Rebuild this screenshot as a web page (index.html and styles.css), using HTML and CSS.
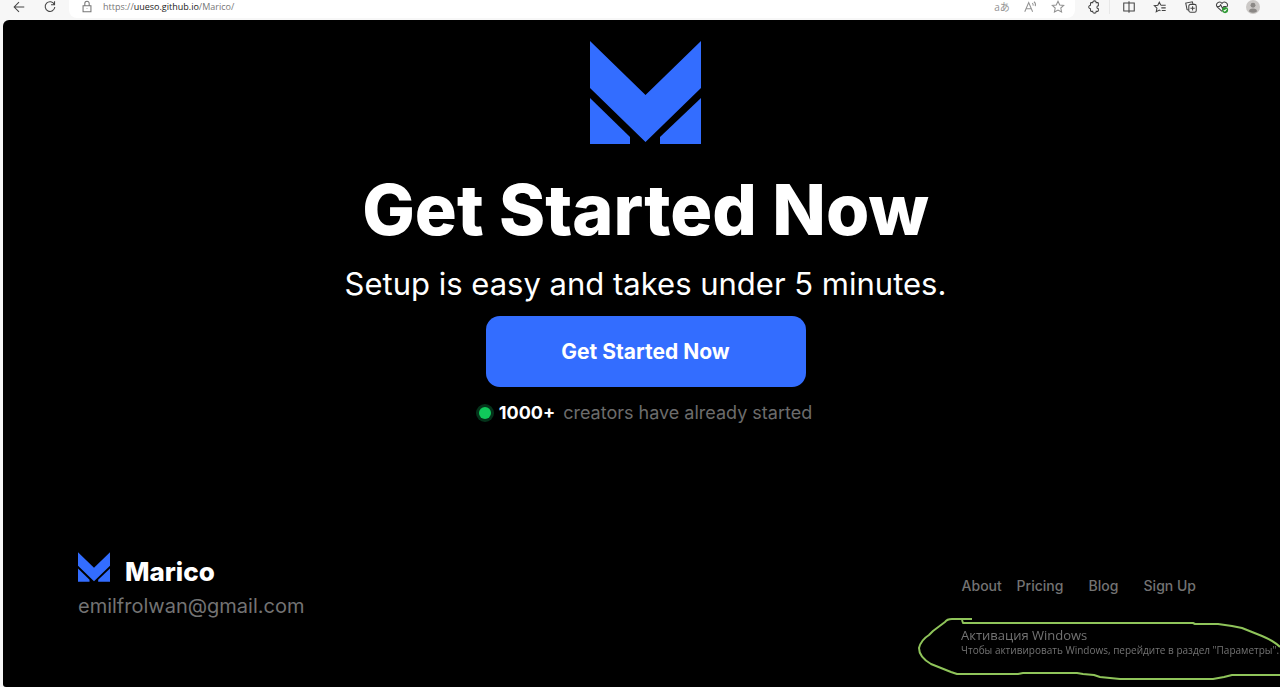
FILE: index.html
```html
<!DOCTYPE html>
<html lang="en">
<head>
<meta charset="utf-8">
<title>Marico</title>
<link rel="stylesheet" href="styles.css">
</head>
<body>
<svg class="defs" aria-hidden="true">
  <symbol id="logo" viewBox="0 0 111 103">
    <path d="M0 0 55.500 54 111 0V47L55.500 101 0 47Z"/>
    <path d="M0 57 40 96V103H0Z"/>
    <path d="M111 57 70 96V103H111Z"/>
  </symbol>
</svg>
<header class="toolbar">
  <button class="tool" aria-label="Back"><svg viewBox="0 0 16 16"><path d="M14 8H2.500M8 2.500 2.500 8 8 13.500"/></svg></button>
  <button class="tool" aria-label="Refresh"><svg viewBox="0 0 16 16"><path d="M13 5.200A5.500 5.500 0 1 0 13.500 8M13.200 1.500V5.500H9.200"/></svg></button>
  <div class="address">
    <svg class="lock" viewBox="0 0 16 16"><path d="M3.500 6.500h9v7h-9zM5.500 6.500V4a2.500 2.500 0 0 1 5 0v2.500M8 9.800v.6"/></svg>
    <span class="url">https://<b>uueso.github.io</b>/Marico/</span>
    <button class="tool pale letters" aria-label="Translate">aあ</button>
    <button class="tool pale" aria-label="Read aloud"><svg viewBox="0 0 16 16"><path d="M2 13.500 6.500 3 11 13.500M3.600 10h5.800M10.500 3.500q1.500 1 1 3M12.500 2q2.500 1.800 1.500 5"/></svg></button>
    <button class="tool pale" aria-label="Add to favorites"><svg viewBox="0 0 16 16"><path d="m8 1.500 2 4.200 4.500.5-3.300 3 .9 4.600L8 11.600l-4.100 2.200.9-4.600-3.300-3 4.500-.5z"/></svg></button>
  </div>
  <div class="tools">
    <button class="tool extensions" aria-label="Extensions"><svg viewBox="0 0 16 16"><path d="M5 3h1.500a2 2 0 0 1 4 0H12a1 1 0 0 1 1 1v2.500a1.700 1.700 0 0 0 0 3.400V12a1 1 0 0 1-1 1h-1.500a2 2 0 0 1-4 0H5a1 1 0 0 1-1-1v-2a2 2 0 0 1 0-4V4a1 1 0 0 1 1-1z"/></svg></button>
    <button class="tool" aria-label="Split screen"><svg viewBox="0 0 16 16"><path d="M8 3.500H2v9h6M8 3.500h6v9H8M8 1.500v13"/></svg></button>
    <button class="tool" aria-label="Favorites"><svg viewBox="0 0 16 16"><path d="M9 6 7.200 2.500 5.500 6l-4 .5 3 2.800-.8 4.200 3.500-2 1.300.8M9 6h5.500M9.500 9h5M10 12h4.500"/></svg></button>
    <button class="tool" aria-label="Collections"><svg viewBox="0 0 16 16"><path d="M5 11.500 3.500 11 2 3.500 9.500 2l.7 2.500M7.500 5H12a2 2 0 0 1 2 2v5a2 2 0 0 1-2 2H7.500a2 2 0 0 1-2-2V7a2 2 0 0 1 2-2zM9.800 7v5M7.300 9.500h5"/></svg></button>
    <button class="tool" aria-label="Browser essentials"><svg viewBox="0 0 16 16"><path d="M8 13 2.500 7.800a3.300 3.300 0 0 1 5.500-4 3.300 3.300 0 0 1 5.500 4M2 7.500h3l1.500-2 2 4 1.500-2h3"/><circle class="badge" cx="11.500" cy="11.500" r="3.500"/><path class="tick" d="m10 11.500 1.200 1.200 2-2.200"/></svg></button>
    <button class="tool" aria-label="Profile"><svg class="avatar" viewBox="0 0 16 16"><circle class="disc" cx="8" cy="8" r="8"/><circle class="person" cx="8" cy="6" r="2.800"/><path class="person" d="M3.500 13a4.500 3.200 0 0 1 9 0q-4.500 3-9 0z"/></svg></button>
  </div>
</header>
<div class="page">
  <main class="hero">
    <svg class="hero-logo" role="img" aria-label="Marico logo"><use href="#logo"/></svg>
    <h1 class="title">Get Started Now</h1>
    <p class="subtitle">Setup is easy and takes under 5 minutes.</p>
    <button class="cta">Get Started Now</button>
    <p class="proof"><span class="dot"></span><strong>1000+</strong><span>creators have already started</span></p>
  </main>
  <footer class="footer">
    <div>
      <div class="brand"><svg class="brand-logo" aria-hidden="true"><use href="#logo"/></svg><span>Marico</span></div>
      <a class="email" href="mailto:emilfrolwan@gmail.com">emilfrolwan@gmail.com</a>
    </div>
    <nav class="links"><a href="#">About</a><a href="#">Pricing</a><a href="#">Blog</a><a href="#">Sign Up</a></nav>
  </footer>
</div>
<aside class="activation" lang="ru">
  <svg class="scribble" viewBox="0 0 364 72" aria-hidden="true"><path d="M56 4H36Q31 4 29 7L17 16 13 20Q5 25 3 33 3 42 15 49L35 57 41 59H102L107 58H161L167 59 178 60 184 62 204 64H297L308 62 316 60H364M46 5 47 8H277L279 9H302L316 11 326 13 346 21Q358 26 364 32"/></svg>
  <p class="activation-title">Активация Windows</p>
  <p class="activation-text">Чтобы активировать Windows, перейдите в раздел "Параметры".</p>
</aside>
</body>
</html>
```

FILE: styles.css
```css
* { box-sizing: border-box; }

body {
  display: flex;
  flex-direction: column;
  min-height: 100vh;
  margin: 0;
  background: #f7f7f7;
  font-family: Inter, "Open Sans", sans-serif;
}

h1, p { margin: 0; }
a { color: inherit; text-decoration: none; }
button { border: 0; font-family: inherit; cursor: pointer; }

.defs { position: absolute; width: 0; height: 0; }

/* Browser toolbar */
.toolbar {
  display: flex;
  align-items: flex-start;
  gap: 7px;
  height: 20px;
  padding: 0 15px 0 7px;
}

.tool {
  display: grid;
  place-items: center;
  width: 24px;
  height: 14px;
  padding: 0;
  background: none;
  color: #444;
}

.tool svg, .lock {
  width: 14px;
  height: 14px;
  fill: none;
  stroke: currentColor;
  stroke-width: 1.2;
}

.pale { color: #929292; }
.letters { font: 10px "Open Sans", "Noto Sans CJK JP", sans-serif; line-height: 14px; }

.address {
  display: flex;
  flex: 1;
  gap: 4px;
  height: 18px;
  padding: 0 5px 0 11px;
  border-radius: 0 0 8px 8px;
  background: #fff;
}

.lock { color: #777; }

.url {
  flex: 1;
  padding-left: 5px;
  color: #777;
  font: 9px/14px "Open Sans", sans-serif;
}

.url b { color: #222; font-weight: 400; }

.tools { display: flex; gap: 7px; }

.extensions {
  width: 28px;
  padding-right: 3px;
  border-right: 1px solid #e8e8e8;
}

.tool .badge { fill: #2f9a35; stroke: none; }
.tool .tick { stroke: #fff; }
.tool .disc { fill: #cbc8c6; stroke: none; }
.tool .person { fill: #8b8886; stroke: none; }

/* Page */
.page {
  display: flex;
  flex: 1;
  flex-direction: column;
  justify-content: space-between;
  margin-left: 3px;
  border-radius: 6px 0 0 3px;
  background: #000;
}

.hero {
  display: flex;
  flex-direction: column;
  align-items: center;
  padding: 21px 0 0 8px;
  color: #fff;
  text-align: center;
}

.hero-logo { width: 111px; height: 103px; fill: #336dff; }
.title { margin-top: 24px; font-size: 70px; font-weight: 800; line-height: 84px; }
.subtitle { margin-top: 8px; font-size: 31px; line-height: 48px; }

.cta {
  width: 320px;
  margin-top: 8px;
  padding: 20px;
  border-radius: 14px;
  background: #336dff;
  color: #fff;
  font-size: 21px;
  font-weight: 700;
  line-height: 31px;
}

.proof {
  display: flex;
  align-items: center;
  gap: 8px;
  margin-top: 12px;
  color: #6c6c6c;
  font-size: 18px;
  line-height: 28px;
}

.proof strong { color: #fff; }

.dot {
  width: 12px;
  height: 12px;
  border-radius: 50%;
  background: #10c95b;
  box-shadow: 0 0 0 3px #04331a;
}

.footer {
  display: flex;
  align-items: center;
  justify-content: space-between;
  padding: 0 84px 67px 75px;
  color: #737373;
}

.brand {
  display: flex;
  gap: 15px;
  color: #fff;
  font-size: 26px;
  font-weight: 800;
  line-height: 40px;
}

.brand-logo { width: 32px; height: 30px; fill: #336dff; }
.email { display: block; font-size: 20px; line-height: 28px; }

.links {
  display: grid;
  grid-template-columns: 55px 72px 55px auto;
  font-size: 14px;
  font-weight: 500;
  line-height: 20px;
}

/* Windows activation notice */
.activation {
  position: fixed;
  right: 0;
  bottom: 0;
  width: 364px;
  height: 72px;
  padding: 11px 0 0 45px;
  color: #737373;
  font-family: "Open Sans", sans-serif;
  white-space: nowrap;
  pointer-events: none;
}

.scribble {
  position: absolute;
  inset: 0;
  fill: none;
  stroke: #8fc45a;
  stroke-width: 2;
  stroke-linejoin: round;
}

.activation-title { font-size: 13px; line-height: 18px; }
.activation-text { font-size: 10px; line-height: 12px; }
```
